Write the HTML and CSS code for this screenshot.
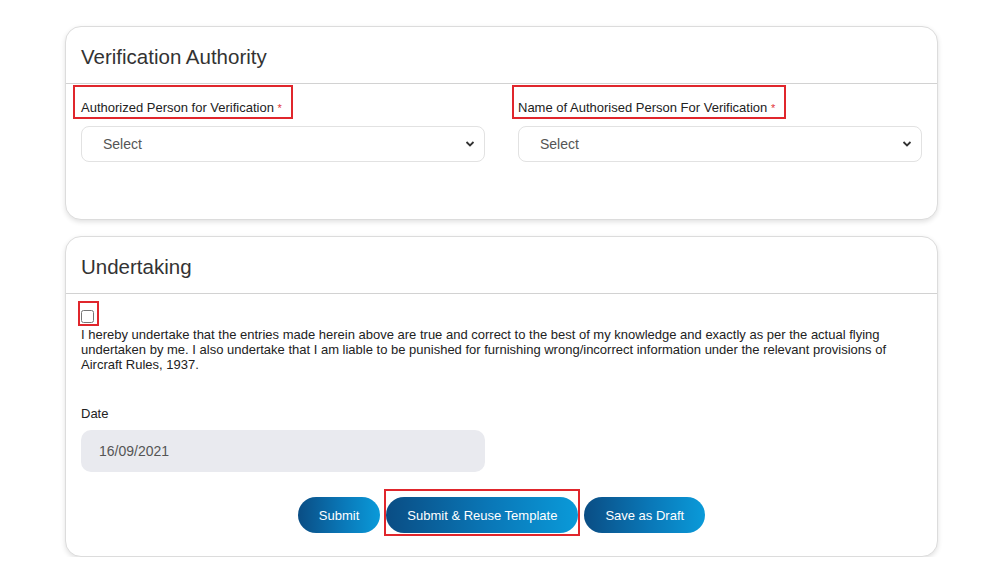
FILE: index.html
```html
<!DOCTYPE html>
<html lang="en">
<head>
    <meta charset="UTF-8">
    <meta name="viewport" content="width=device-width, initial-scale=1.0">
    <title>Verification &amp; Undertaking</title>
    <link rel="stylesheet" href="styles.css">
</head>
<body>
    <main class="page">
        <section class="card">
            <div class="card-header">Verification Authority</div>
            <div class="card-body verification">
                <div class="field">
                    <label class="marked" for="authPerson">Authorized Person for Verification <span class="req">*</span></label>
                    <select id="authPerson" class="control">
                        <option>Select</option>
                    </select>
                </div>
                <div class="field">
                    <label class="marked" for="authName">Name of Authorised Person For Verification <span class="req">*</span></label>
                    <select id="authName" class="control">
                        <option>Select</option>
                    </select>
                </div>
            </div>
        </section>

        <section class="card">
            <div class="card-header">Undertaking</div>
            <div class="card-body undertaking">
                <span class="check-wrap"><input type="checkbox" id="agree"></span>
                <p class="declaration">I hereby undertake that the entries made herein above are true and correct to the best of my knowledge and exactly as per the actual flying undertaken by me. I also undertake that I am liable to be punished for furnishing wrong/incorrect information under the relevant provisions of Aircraft Rules, 1937.</p>

                <div class="date-field">
                    <label for="date">Date</label>
                    <input type="text" id="date" class="control readonly" value="16/09/2021" readonly>
                </div>

                <div class="actions">
                    <button class="btn">Submit</button>
                    <button class="btn marked-btn">Submit &amp; Reuse Template</button>
                    <button class="btn">Save as Draft</button>
                </div>
            </div>
        </section>
    </main>
</body>
</html>
```

FILE: styles.css
```css
/* General Styles */
body {
    margin: 0;
    font-family: "Liberation Sans", Arial, sans-serif;
    background: #fff;
    color: #222;
}

.page {
    width: 873px;
    margin-left: 65px;
    padding-top: 26px;
    display: flex;
    flex-direction: column;
    gap: 16px;
}

/* Cards */
.card {
    border: 1px solid #dcdcdc;
    border-radius: 16px;
    background: #fff;
    box-shadow: 0 2px 5px rgba(0, 0, 0, 0.12);
}

.card-header {
    padding: 18px 15px 15px;
    font-size: 20.5px;
    line-height: 23px;
    color: #333;
    border-bottom: 1px solid #d2d2d2;
}

.card-body {
    padding: 0 15px;
}

/* Verification */
.verification {
    display: grid;
    grid-template-columns: 1fr 1fr;
    column-gap: 33px;
    padding-top: 1px;
    padding-bottom: 57px;
}

.field label {
    display: inline-block;
    font-size: 13px;
    color: #222;
}

.marked {
    border: 2px solid #e0262c;
    padding: 13px 9px 2px 6px;
    margin-left: -8px;
}

.field:nth-child(2) .marked {
    padding-left: 4px;
    margin-left: -6px;
}

.req {
    color: #e2343a;
    font-size: 11px;
}

.control {
    display: block;
    width: 100%;
    box-sizing: border-box;
    font-family: inherit;
    font-size: 14px;
    color: #555;
    border: 1px solid #e2e2e2;
    border-radius: 8px;
    background: #fff;
    outline: none;
}

select.control {
    margin-top: 7px;
    height: 36px;
    padding: 0 30px 0 21px;
    appearance: none;
    -webkit-appearance: none;
    background-image: url("data:image/svg+xml,%3Csvg xmlns='http://www.w3.org/2000/svg' width='10' height='8' viewBox='0 0 10 8'%3E%3Cpath d='M1.5 2 L5 5.5 L8.5 2' fill='none' stroke='%23333' stroke-width='1.8'/%3E%3C/svg%3E");
    background-repeat: no-repeat;
    background-position: right 9px center;
}

/* Undertaking */
.undertaking {
    padding-top: 7px;
    padding-bottom: 23px;
}

.check-wrap {
    display: inline-block;
    border: 2px solid #e0262c;
    padding: 7px 3px 1px 1px;
    margin-left: -3px;
    line-height: 0;
}

.check-wrap input {
    margin: 0;
    width: 13px;
    height: 13px;
}

.declaration {
    margin: 0;
    font-size: 13px;
    color: #222;
}

.date-field {
    margin-top: 34px;
}

.date-field label {
    display: block;
    font-size: 13px;
    margin-bottom: 9px;
}

.readonly {
    width: 404px;
    height: 42px;
    padding: 0 18px;
    border: none;
    border-radius: 10px;
    background: #e9eaef;
}

/* Buttons */
.actions {
    display: flex;
    justify-content: center;
    gap: 5px;
    margin-top: 25px;
}

.btn {
    height: 36px;
    padding: 0 21px;
    border: none;
    border-radius: 18px;
    font-family: inherit;
    font-size: 13px;
    color: #fff;
    background: linear-gradient(to right, #0a4d84, #0a78b8 55%, #0a9ad9);
    cursor: pointer;
}

.marked-btn {
    position: relative;
    margin: 0 1px;
}

.marked-btn::after {
    content: "";
    position: absolute;
    top: -8px;
    bottom: -3px;
    left: -2px;
    right: -2px;
    border: 2px solid #e0262c;
}
```
